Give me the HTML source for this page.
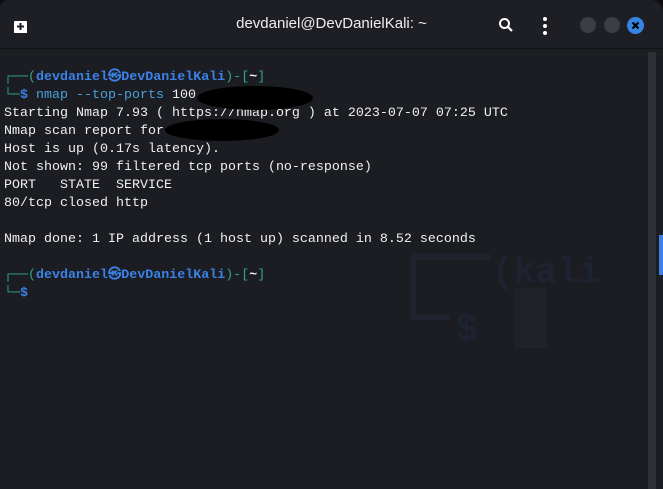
<!DOCTYPE html>
<html><head><meta charset="utf-8"><style>
*{margin:0;padding:0;box-sizing:border-box}
html,body{width:663px;height:489px;overflow:hidden;background:#0d0e11}
.win{position:absolute;left:0;top:0;width:663px;height:489px;background:#1b1d22;border-radius:8px 12px 0 0;overflow:hidden}
.hdr{position:absolute;left:0;top:0;width:663px;height:49px;background:#1e1f24;border-bottom:1px solid #111214}
.title{position:absolute;left:0;width:663px;top:15px;text-align:center;font:15px "Liberation Sans",sans-serif;color:#eee}
.term{position:absolute;left:4px;top:69px;font:13.33px/18px "Liberation Mono",monospace;color:#f0f0f0;white-space:pre}
.g{color:#2fa58a}.b{color:#3b82e8;font-weight:bold}.c{color:#4aa0d8}
.blob{position:absolute;background:#000;border-radius:50%}
.sb{position:absolute;left:648px;top:52px;width:8px;height:437px;background:#2e2f34}
</style></head><body>
<div class="win">
<svg style="position:absolute;left:0;top:0" width="663" height="489">
<path d="M413 257 H490 M413 257 V317 H450" stroke="#1e232d" stroke-width="6" fill="none"/>
<rect x="514" y="288" width="33" height="60" fill="#212227"/>
<text x="455" y="340" font-family="Liberation Mono" font-weight="bold" font-size="38" fill="#1d2331">$</text>
<text x="492" y="282" font-family="Liberation Mono" font-weight="bold" font-size="36" fill="#1d2331">(kali</text>
</svg>
<div class="hdr">
<svg style="position:absolute;left:14px;top:20px" width="14" height="14"><rect x="0" y="1" width="13" height="12" rx="1" fill="#fff"/><path d="M6.5 3v7M3 6.5h7" stroke="#1e1f24" stroke-width="2"/><rect x="0" y="11" width="13" height="2" fill="#fff"/></svg>
<div class="title">devdaniel@DevDanielKali: ~</div>
<svg style="position:absolute;left:498px;top:17px" width="16" height="16"><circle cx="6.5" cy="6.5" r="4.5" stroke="#fff" stroke-width="2" fill="none"/><path d="M10 10l4 4" stroke="#fff" stroke-width="2.2"/></svg>
<svg style="position:absolute;left:541px;top:16px" width="8" height="20"><circle cx="4" cy="3" r="2" fill="#fff"/><circle cx="4" cy="10" r="2" fill="#fff"/><circle cx="4" cy="17" r="2" fill="#fff"/></svg>
<div style="position:absolute;left:580px;top:17px;width:16px;height:16px;border-radius:50%;background:#3c3d46"></div>
<div style="position:absolute;left:604px;top:17px;width:16px;height:16px;border-radius:50%;background:#3c3d46"></div>
<svg style="position:absolute;left:627px;top:17px" width="17" height="17"><circle cx="8.5" cy="8.5" r="8.5" fill="#3584e4"/><path d="M5.5 5.5l6 6M11.5 5.5l-6 6" stroke="#000" stroke-width="2.2"/></svg>
</div>
<div class="sb"></div>
<div style="position:absolute;left:659px;top:235px;width:4px;height:40px;background:#3b82e8"></div>
<div class="term"><span class="g">┌──(</span><span class="b">devdaniel㉿DevDanielKali</span><span class="g">)-[</span><span style="font-weight:bold">~</span><span class="g">]</span>
<span class="g">└─</span><span class="b">$</span> <span class="c">nmap --top-ports</span> 100
Starting Nmap 7.93 ( https://nmap.org ) at 2023-07-07 07:25 UTC
Nmap scan report for
Host is up (0.17s latency).
Not shown: 99 filtered tcp ports (no-response)
PORT   STATE  SERVICE
80/tcp closed http

Nmap done: 1 IP address (1 host up) scanned in 8.52 seconds

<span class="g">┌──(</span><span class="b">devdaniel㉿DevDanielKali</span><span class="g">)-[</span><span style="font-weight:bold">~</span><span class="g">]</span>
<span class="g">└─</span><span class="b">$</span> </div>
<div class="blob" style="left:197px;top:86px;width:116px;height:24px"></div>
<div class="blob" style="left:165px;top:119px;width:114px;height:22px"></div>
</div>
</body></html>
